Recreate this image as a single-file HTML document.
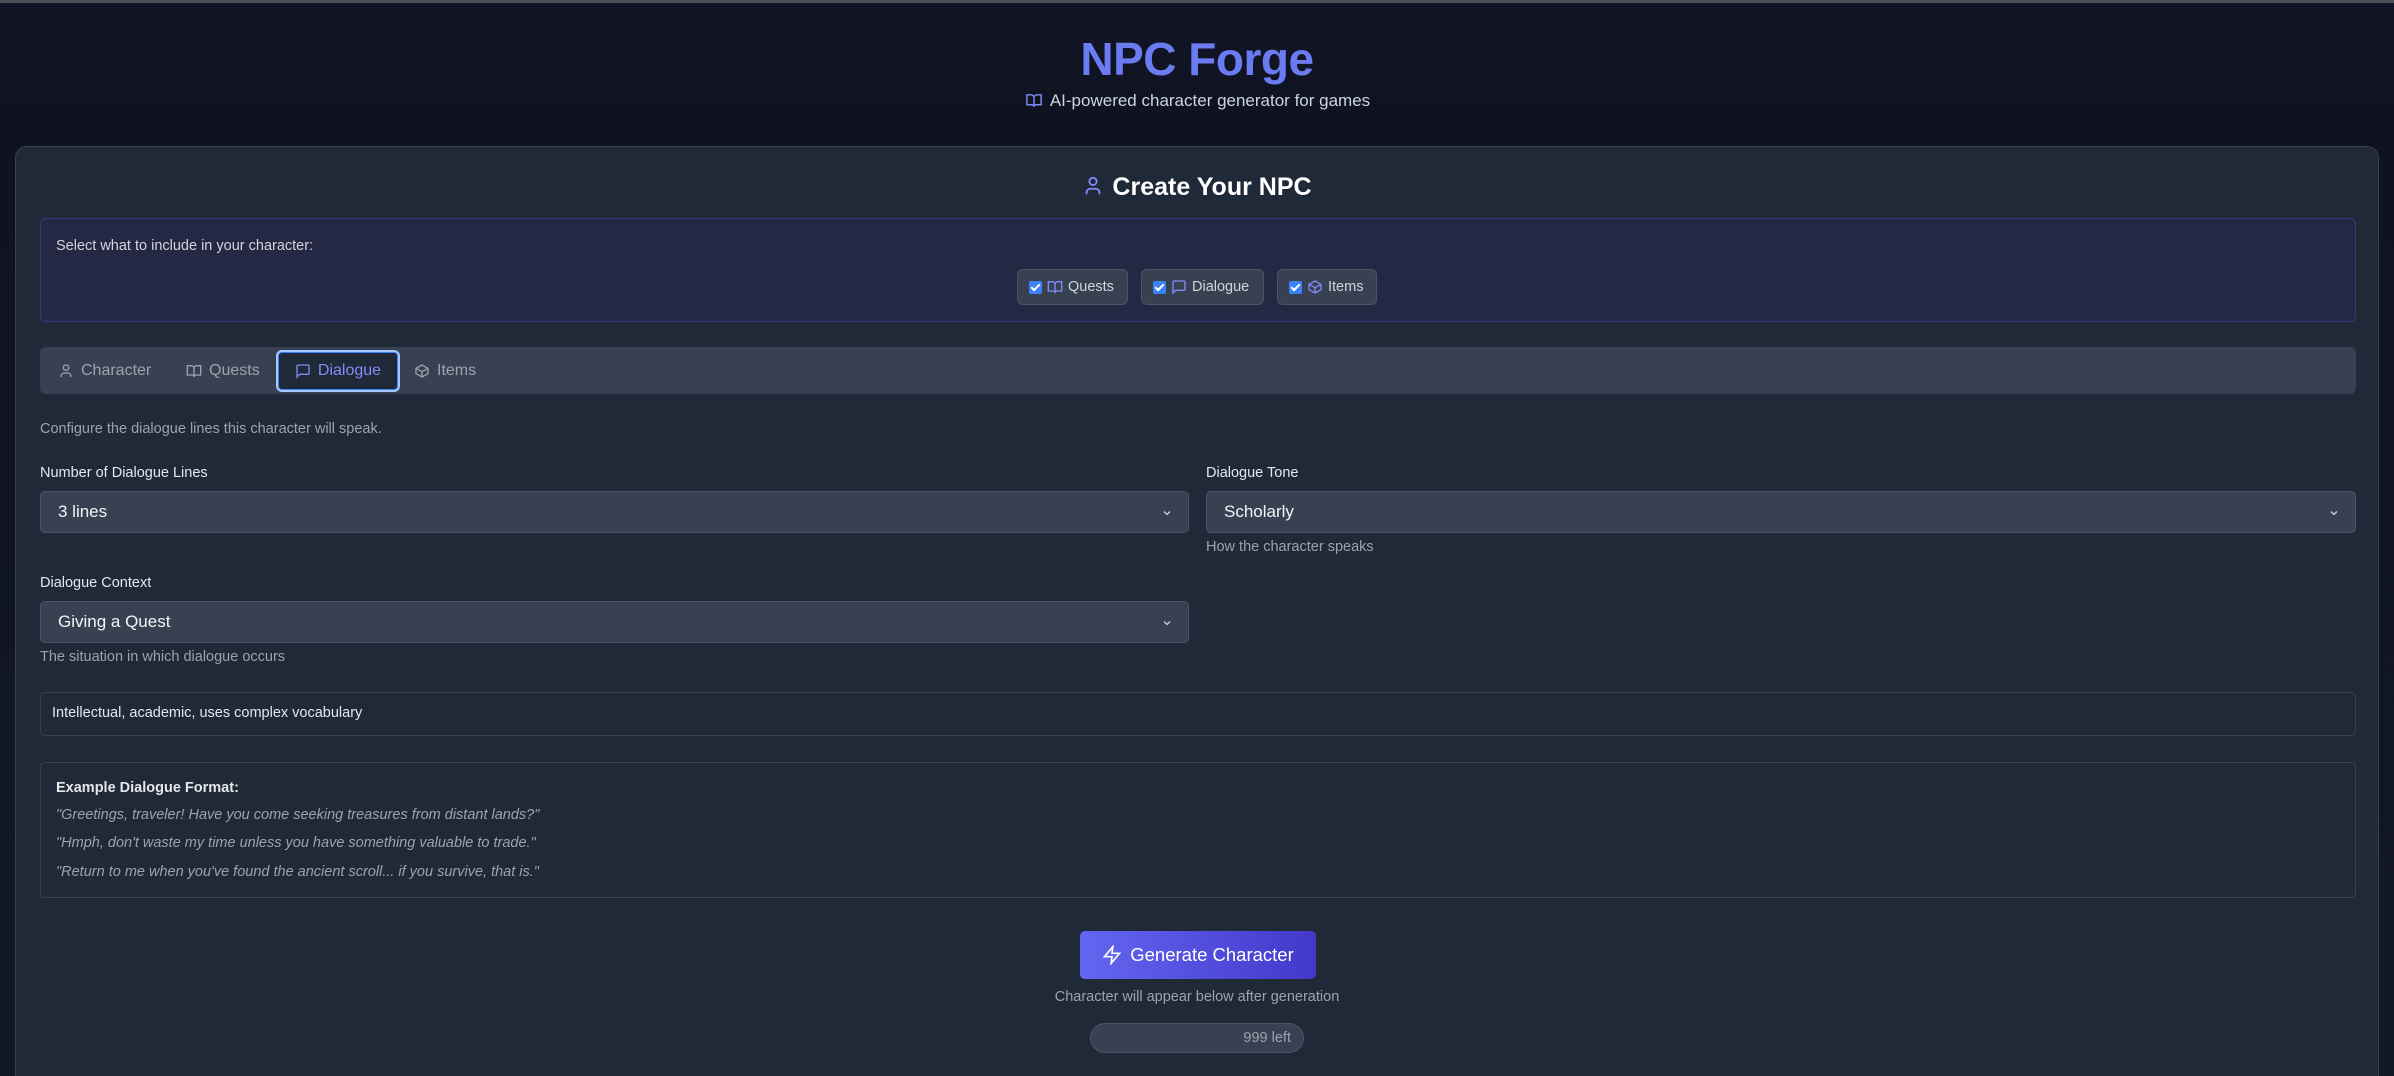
<!DOCTYPE html>
<html><head><meta charset="utf-8">
<style>
*{box-sizing:border-box;margin:0;padding:0}
html,body{width:2394px;height:1076px;overflow:hidden}
body{background:linear-gradient(180deg,#111526 0%,#0f1220 12%,#121827 100%);font-family:"Liberation Sans",sans-serif;color:#e5e7eb;position:relative;border-top:3px solid #4b4f58}
.abs{position:absolute;margin-top:-3px}
h1{position:absolute;left:0;width:2394px;top:29px;text-align:center;font-size:46px;font-weight:bold;color:#6b7cf3;letter-spacing:-0.5px}
.sub{top:91px;left:0;width:2394px;text-align:center;font-size:17px;color:#cbd5e1}
.card{left:15px;top:146px;width:2364px;height:960px;background:#1f2937;border:1px solid #374151;border-radius:12px}
.title{top:173px;left:0;width:2394px;text-align:center;font-size:25px;font-weight:bold;color:#fff}
.sel{left:40px;top:218px;width:2316px;height:104px;background:#242844;border:1px solid #323a7a;border-radius:6px}
.chip{top:269px;height:36px;background:#374151;border:1px solid #4b5563;border-radius:6px;font-size:14.5px;color:#d1d5db;display:flex;align-items:center;padding-left:11px;gap:5px}
.cb{width:13px;height:13px;background:#3b82f6;border-radius:2px;position:relative}
.cb:after{content:"";position:absolute;left:4px;top:1px;width:3px;height:7px;border:solid #fff;border-width:0 2px 2px 0;transform:rotate(45deg)}
.tabs{left:40px;top:347px;width:2316px;height:47px;background:#374151;border-radius:6px}
.tab{top:350px;height:42px;font-size:16px;color:#9ca3af;display:flex;align-items:center;gap:7px}
.act{left:276px;width:124px;background:#1f2937;border:2px solid #a5c8ff;border-radius:6px;color:#818cf8;justify-content:center;box-shadow:0 0 0 1px #3b82f6 inset}
.small{font-size:14.5px;color:#9ca3af}
.lab{font-size:14.5px;color:#e5e7eb}
.select{height:42px;background:#374151;border:1px solid #4b5563;border-radius:5px;font-size:17px;color:#f3f4f6;padding-left:17px;display:flex;align-items:center}
.select svg{position:absolute;right:15px;top:15px}
.box{border:1px solid #374151;border-radius:5px}
.it{font-style:italic;font-size:14.5px;color:#9ca3af;left:56px}
.btn{left:1080px;top:931px;width:236px;height:48px;border-radius:5px;background:linear-gradient(90deg,#6366f1,#4338ca);color:#fff;font-size:18.5px;display:flex;align-items:center;justify-content:center;gap:8px}
.pill{left:1090px;top:1023px;width:214px;height:30px;border-radius:15px;background:#374151;border:1px solid #4b5563;font-size:14.5px;color:#9ca3af;text-align:right;padding-right:12px;line-height:28px}
</style></head><body>
<h1>NPC Forge</h1>
<div class="abs sub"><svg width="20" height="17" viewBox="0 0 24 24" fill="none" stroke="#818cf8" stroke-width="2" style="vertical-align:-3px;margin-right:6px"><path d="M2 4h6a4 4 0 0 1 4 4v13a3 3 0 0 0-3-3H2zM22 4h-6a4 4 0 0 0-4 4v13a3 3 0 0 1 3-3h7z"/></svg>AI-powered character generator for games</div>
<div class="abs card"></div>
<div class="abs title"><svg width="22" height="24" viewBox="0 0 24 24" fill="none" stroke="#818cf8" stroke-width="2" style="vertical-align:-3px;margin-right:8px"><circle cx="12" cy="7" r="4"/><path d="M19 21v-2a4 4 0 0 0-4-4H9a4 4 0 0 0-4 4v2"/></svg>Create Your NPC</div>
<div class="abs sel"></div>
<div class="abs small" style="left:56px;top:238px;color:#d1d5db">Select what to include in your character:</div>
<div class="abs chip" style="left:1017px;width:111px"><span class="cb"></span><svg width="16" height="16" viewBox="0 0 24 24" fill="none" stroke="#818cf8" stroke-width="2"><path d="M2 4h6a4 4 0 0 1 4 4v13a3 3 0 0 0-3-3H2zM22 4h-6a4 4 0 0 0-4 4v13a3 3 0 0 1 3-3h7z"/></svg>Quests</div>
<div class="abs chip" style="left:1141px;width:123px"><span class="cb"></span><svg width="16" height="16" viewBox="0 0 24 24" fill="none" stroke="#818cf8" stroke-width="2"><path d="M21 15a2 2 0 0 1-2 2H7l-4 4V5a2 2 0 0 1 2-2h14a2 2 0 0 1 2 2z"/></svg>Dialogue</div>
<div class="abs chip" style="left:1277px;width:100px"><span class="cb"></span><svg width="16" height="16" viewBox="0 0 24 24" fill="none" stroke="#818cf8" stroke-width="2"><path d="M21 16V8l-9-5-9 5v8l9 5z"/><path d="M3 8l9 5 9-5M12 13v8"/></svg>Items</div>
<div class="abs tabs"></div>
<div class="abs tab" style="left:58px"><svg width="16" height="16" viewBox="0 0 24 24" fill="none" stroke="#9ca3af" stroke-width="2"><circle cx="12" cy="7" r="4"/><path d="M19 21v-2a4 4 0 0 0-4-4H9a4 4 0 0 0-4 4v2"/></svg>Character</div>
<div class="abs tab" style="left:186px"><svg width="16" height="16" viewBox="0 0 24 24" fill="none" stroke="#9ca3af" stroke-width="2"><path d="M2 4h6a4 4 0 0 1 4 4v13a3 3 0 0 0-3-3H2zM22 4h-6a4 4 0 0 0-4 4v13a3 3 0 0 1 3-3h7z"/></svg>Quests</div>
<div class="abs tab act"><svg width="16" height="16" viewBox="0 0 24 24" fill="none" stroke="#818cf8" stroke-width="2"><path d="M21 15a2 2 0 0 1-2 2H7l-4 4V5a2 2 0 0 1 2-2h14a2 2 0 0 1 2 2z"/></svg>Dialogue</div>
<div class="abs tab" style="left:414px"><svg width="16" height="16" viewBox="0 0 24 24" fill="none" stroke="#9ca3af" stroke-width="2"><path d="M21 16V8l-9-5-9 5v8l9 5z"/><path d="M3 8l9 5 9-5M12 13v8"/></svg>Items</div>
<div class="abs small" style="left:40px;top:421px">Configure the dialogue lines this character will speak.</div>
<div class="abs lab" style="left:40px;top:465px">Number of Dialogue Lines</div>
<div class="abs lab" style="left:1206px;top:465px">Dialogue Tone</div>
<div class="abs select" style="left:40px;top:491px;width:1149px">3 lines<svg width="12" height="12" viewBox="0 0 24 24" fill="none" stroke="#d1d5db" stroke-width="2.5"><path d="M6 9l6 6 6-6"/></svg></div>
<div class="abs select" style="left:1206px;top:491px;width:1150px">Scholarly<svg width="12" height="12" viewBox="0 0 24 24" fill="none" stroke="#d1d5db" stroke-width="2.5"><path d="M6 9l6 6 6-6"/></svg></div>
<div class="abs small" style="left:1206px;top:539px">How the character speaks</div>
<div class="abs lab" style="left:40px;top:575px">Dialogue Context</div>
<div class="abs select" style="left:40px;top:601px;width:1149px">Giving a Quest<svg width="12" height="12" viewBox="0 0 24 24" fill="none" stroke="#d1d5db" stroke-width="2.5"><path d="M6 9l6 6 6-6"/></svg></div>
<div class="abs small" style="left:40px;top:649px">The situation in which dialogue occurs</div>
<div class="abs box" style="left:40px;top:692px;width:2316px;height:44px"></div>
<div class="abs small" style="left:52px;top:705px;color:#e5e7eb">Intellectual, academic, uses complex vocabulary</div>
<div class="abs box" style="left:40px;top:762px;width:2316px;height:136px"></div>
<div class="abs" style="left:56px;top:780px;font-size:14.5px;font-weight:bold;color:#e5e7eb">Example Dialogue Format:</div>
<div class="abs it" style="top:807px">"Greetings, traveler! Have you come seeking treasures from distant lands?"</div>
<div class="abs it" style="top:835px">"Hmph, don't waste my time unless you have something valuable to trade."</div>
<div class="abs it" style="top:864px">"Return to me when you've found the ancient scroll... if you survive, that is."</div>
<div class="abs btn"><svg width="20" height="20" viewBox="0 0 24 24" fill="none" stroke="#fff" stroke-width="2"><path d="M13 2L3 14h9l-1 8 10-12h-9z"/></svg>Generate Character</div>
<div class="abs small" style="left:0;width:2394px;text-align:center;top:989px">Character will appear below after generation</div>
<div class="abs pill">999 left</div>
</body></html>
